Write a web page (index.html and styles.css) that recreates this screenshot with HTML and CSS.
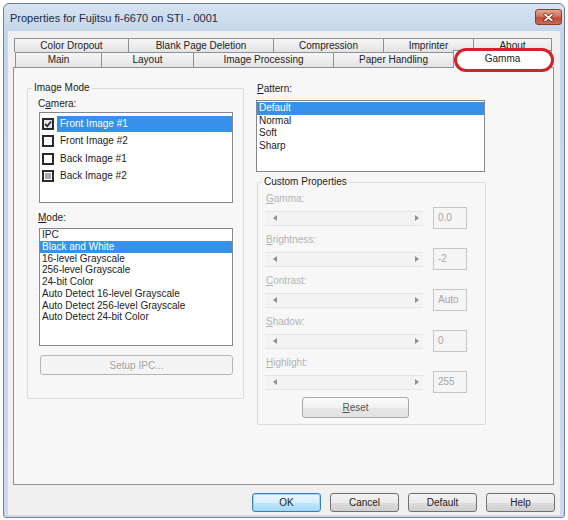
FILE: index.html
```html
<!DOCTYPE html>
<html lang="en">
<head>
<meta charset="utf-8">
<title>Scanner Properties</title>
<link rel="stylesheet" href="styles.css">
</head>
<body>
<div class="window">
  <div class="titlebar">
    <span class="title">Properties for Fujitsu fi-6670 on STI - 0001</span>
    <span class="close">
      <svg width="11" height="9" viewBox="0 0 11 9"><path d="M2 1.5 L9 7.5 M9 1.5 L2 7.5" stroke="#5a1a12" stroke-width="3.2" stroke-linecap="round"/><path d="M2 1.5 L9 7.5 M9 1.5 L2 7.5" stroke="#fff" stroke-width="1.8" stroke-linecap="round"/></svg>
    </span>
  </div>

  <div class="client">
    <div class="tabs">
      <div class="tabrow back">
        <div class="tab t1">Color Dropout</div>
        <div class="tab t2">Blank Page Deletion</div>
        <div class="tab t3">Compression</div>
        <div class="tab t4">Imprinter</div>
        <div class="tab t5">About</div>
      </div>
      <div class="tabrow front">
        <div class="tab f1">Main</div>
        <div class="tab f2">Layout</div>
        <div class="tab f3">Image Processing</div>
        <div class="tab f4">Paper Handling</div>
        <div class="tab f5 sel">Gamma</div>
      </div>
      <div class="ring"></div>
    </div>

    <div class="panel">
      <fieldset class="group grp-image">
        <legend>Image Mode</legend>
        <div class="grp-body image-body">
          <span class="lbl">C<u>a</u>mera:</span>
          <div class="list cam">
            <div class="cam-item">
              <span class="cb checked"><svg width="8" height="8" viewBox="0 0 8 8"><path d="M1 4 L3.2 6.2 L7 1.5" fill="none" stroke="#222" stroke-width="1.7"/></svg></span>
              <span class="cam-text selected">Front Image #1</span>
            </div>
            <div class="cam-item">
              <span class="cb"></span>
              <span class="cam-text">Front Image #2</span>
            </div>
            <div class="cam-item">
              <span class="cb"></span>
              <span class="cam-text">Back Image #1</span>
            </div>
            <div class="cam-item">
              <span class="cb mixed"></span>
              <span class="cam-text">Back Image #2</span>
            </div>
          </div>

          <span class="lbl mode-lbl"><u>M</u>ode:</span>
          <div class="list mode">
            <div class="it">IPC</div>
            <div class="it selected">Black and White</div>
            <div class="it">16-level Grayscale</div>
            <div class="it">256-level Grayscale</div>
            <div class="it">24-bit Color</div>
            <div class="it">Auto Detect 16-level Grayscale</div>
            <div class="it">Auto Detect 256-level Grayscale</div>
            <div class="it">Auto Detect 24-bit Color</div>
          </div>

          <button class="btn btn-setup" disabled>Setup IPC...</button>
        </div>
      </fieldset>

      <div class="right-col">
        <span class="lbl pat-lbl"><u>P</u>attern:</span>
        <div class="list pattern">
          <div class="it selected">Default</div>
          <div class="it">Normal</div>
          <div class="it">Soft</div>
          <div class="it">Sharp</div>
        </div>

        <fieldset class="group grp-custom">
          <legend>Custom Properties</legend>
          <div class="grp-body custom-body">
            <div class="prop">
              <span class="lbl off"><u>G</u>amma:</span>
              <div class="ctl">
                <div class="track"><i class="arr l"></i><i class="arr r"></i></div>
                <span class="val">0.0</span>
              </div>
            </div>
            <div class="prop">
              <span class="lbl off"><u>B</u>rightness:</span>
              <div class="ctl">
                <div class="track"><i class="arr l"></i><i class="arr r"></i></div>
                <span class="val">-2</span>
              </div>
            </div>
            <div class="prop">
              <span class="lbl off"><u>C</u>ontrast:</span>
              <div class="ctl">
                <div class="track"><i class="arr l"></i><i class="arr r"></i></div>
                <span class="val">Auto</span>
              </div>
            </div>
            <div class="prop">
              <span class="lbl off"><u>S</u>hadow:</span>
              <div class="ctl">
                <div class="track"><i class="arr l"></i><i class="arr r"></i></div>
                <span class="val">0</span>
              </div>
            </div>
            <div class="prop">
              <span class="lbl off"><u>H</u>ighlight:</span>
              <div class="ctl">
                <div class="track"><i class="arr l"></i><i class="arr r"></i></div>
                <span class="val">255</span>
              </div>
            </div>
            <button class="btn btn-reset"><u>R</u>eset</button>
          </div>
        </fieldset>
      </div>
    </div>

    <div class="buttons">
      <button class="btn dlg default">OK</button>
      <button class="btn dlg">Cancel</button>
      <button class="btn dlg">Default</button>
      <button class="btn dlg">Help</button>
    </div>
  </div>
</div>
</body>
</html>
```

FILE: styles.css
```css
* { box-sizing: border-box; }

html, body {
  margin: 0;
  padding: 0;
  background: #ffffff;
}

body {
  font-family: "Liberation Sans", Arial, sans-serif;
  font-size: 10px;
  color: #1c1c1c;
}

u { text-decoration: underline; text-underline-offset: 1px; }

/* ---------- window frame ---------- */
.window {
  margin: 3px 0 0 3px;
  width: 562px;
  height: 515px;
  border: 1px solid #6f8196;
  border-radius: 6px 6px 3px 3px;
  background: linear-gradient(#d6e3f1, #c5d6ea 28px, #cbd9ea);
  padding: 0 4px 2px;
  display: flex;
  flex-direction: column;
}

.titlebar {
  height: 27px;
  flex: none;
  display: flex;
  align-items: center;
  justify-content: space-between;
}

.title {
  padding-left: 2px;
  font-size: 11px;
  color: #1b2a44;
}

.close {
  align-self: flex-start;
  margin: 5px -2px 0 0;
  width: 27px;
  height: 16px;
  border: 1px solid #8c3b2e;
  border-radius: 3px;
  background: linear-gradient(#e3a595, #d3735f 45%, #c24a34 55%, #cf6a50);
  display: flex;
  align-items: center;
  justify-content: center;
}

/* ---------- client area ---------- */
.client {
  flex: 1;
  background: #f0f0f0;
  padding: 7px 5px 0 5px;
  display: flex;
  flex-direction: column;
}

/* ---------- tab strip ---------- */
.tabs {
  position: relative;
  height: 29px;
  flex: none;
}

.tabrow { display: flex; }
.tabrow.back { margin-left: 1px; height: 14px; }
.tabrow.front { margin-left: 2px; height: 15px; }

.tab {
  border: 1px solid #8c9199;
  border-bottom: none;
  background: linear-gradient(#f6f6f6, #e3e3e3);
  text-align: center;
  margin-left: -1px;
  color: #222;
  white-space: nowrap;
}
.tab:first-child { margin-left: 0; }
.back .tab { line-height: 13px; }
.front .tab { line-height: 14px; }

.t1 { width: 115px; }
.t2 { width: 146px; }
.t3 { width: 111px; }
.t4 { width: 91px; }
.t5 { width: 79px; }
.f1 { width: 87px; }
.f2 { width: 93px; }
.f3 { width: 141px; }
.f4 { width: 121px; }
.f5 { width: 99px; }

.tab.sel {
  background: #ffffff;
  margin-top: -2px;
  height: 18px;
  line-height: 16px;
  position: relative;
  z-index: 2;
}

/* red marker drawn around the active tab */
.ring {
  position: absolute;
  left: 441px;
  top: 10px;
  width: 100px;
  height: 24px;
  border: 3px solid #d1232b;
  border-radius: 12px;
  z-index: 3;
}

/* ---------- tab page ---------- */
.panel {
  width: 541px;
  height: 418px;
  flex: none;
  border: 1px solid #8c9199;
  background: #f7f7f7;
  display: grid;
  grid-template-columns: 217px 230px;
  column-gap: 12px;
  align-items: start;
  padding: 14px 0 0 13px;
}

.group {
  margin: 0;
  padding: 0;
  min-width: 0;
  border: 1px solid #d9dcdf;
  border-radius: 2px;
}

.group legend {
  margin-left: 4px;
  padding: 0 2px;
  line-height: 12px;
}

.lbl {
  display: block;
  line-height: 12px;
}
.lbl.off { color: #b3b3b3; }

.list {
  background: #ffffff;
  border: 1px solid #828790;
}

.selected {
  background: #3591ea;
  color: #ffffff;
}

/* Image Mode group */
.grp-image { width: 217px; }
.image-body { padding: 4px 9px 23px 10px; }

.cam {
  margin: 2px 0 0 1px;
  width: 194px;
  height: 91px;
  padding-top: 2px;
}

.cam-item {
  display: flex;
  align-items: center;
  height: 17.5px;
}

.cb {
  flex: none;
  width: 12px;
  height: 12px;
  margin-left: 2px;
  border: 2px solid #2a2a2a;
  background: #ffffff;
  display: flex;
  align-items: center;
  justify-content: center;
}
.cb.checked { background: #e2e6ea; }
.cb.mixed { background: #a9a9a9; box-shadow: inset 0 0 0 1px #ffffff; }

.cam-text {
  flex: 1;
  margin-left: 3px;
  padding-left: 3px;
  line-height: 16px;
}

.mode-lbl { margin-top: 9px; }

.mode {
  margin: 4px 0 0 1px;
  width: 194px;
  height: 118px;
}

.mode .it {
  line-height: 11.75px;
  padding-left: 2px;
  white-space: nowrap;
}

/* buttons */
.btn {
  font: inherit;
  display: flex;
  align-items: center;
  justify-content: center;
  border: 1px solid #707070;
  border-radius: 3px;
  background: linear-gradient(#f3f3f3, #ebebeb 50%, #dddddd 51%, #cfcfcf);
  color: #1c1c1c;
  padding: 0;
}

.btn-setup {
  margin: 9px 0 0 2px;
  width: 193px;
  height: 20px;
  border-color: #b5b5b5;
  background: #f4f4f4;
  color: #a3a3a3;
}

/* Pattern column */
.right-col { display: flex; flex-direction: column; }

.pat-lbl { margin: 1px 0 0 1px; }

.pattern {
  margin-top: 5px;
  width: 229px;
  height: 72px;
  padding-top: 1px;
}

.pattern .it {
  line-height: 12.5px;
  padding-left: 2px;
}

/* Custom Properties group */
.grp-custom {
  margin: 4px 0 0 1px;
  width: 229px;
}

.custom-body { padding: 0 8px 6px 8px; }

.prop { padding-top: 5px; }

.ctl {
  margin-top: 2px;
  height: 22px;
  display: flex;
  align-items: center;
}

.track {
  width: 158px;
  height: 15px;
  margin-left: -1px;
  border-top: 1px solid #e4e4e4;
  border-bottom: 1px solid #e4e4e4;
  background: #f3f3f3;
  display: flex;
  align-items: center;
  justify-content: space-between;
  padding: 0 4px 0 8px;
}

.arr {
  width: 0;
  height: 0;
  border-top: 3px solid transparent;
  border-bottom: 3px solid transparent;
}
.arr.l { border-right: 4px solid #8f8f8f; }
.arr.r { border-left: 4px solid #8f8f8f; }

.val {
  margin-left: 10px;
  width: 34px;
  height: 22px;
  border: 1px solid #c6c6c6;
  background: #f5f5f5;
  color: #a6a6a6;
  line-height: 20px;
  padding-left: 4px;
}

.btn-reset {
  margin: 4px 0 0 36px;
  width: 107px;
  height: 21px;
  border-color: #a8a8a8;
  background: linear-gradient(#fbfbfb, #f1f1f1 50%, #e7e7e7 51%, #e2e2e2);
  color: #555;
}

/* dialog buttons */
.buttons {
  display: flex;
  justify-content: flex-end;
  gap: 9px;
  margin-top: 8px;
}

.dlg {
  width: 69px;
  height: 19px;
}

.dlg.default {
  border-color: #3c7fb1;
  background: linear-gradient(#eaf6fd, #d9f0fc 50%, #bee6fd 51%, #a7d9f5);
  box-shadow: inset 0 0 0 1px #9fd6f4;
}
```
